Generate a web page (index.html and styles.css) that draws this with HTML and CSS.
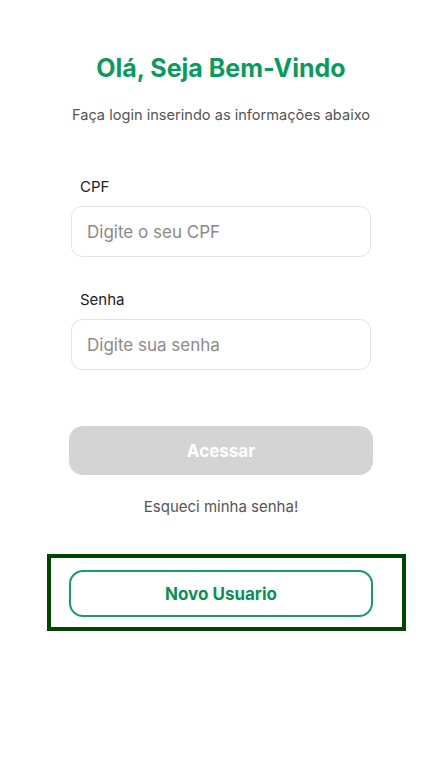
FILE: index.html
```html
<!DOCTYPE html>
<html lang="pt-BR">
<head>
  <meta name="viewport" content="width=device-width, initial-scale=1.0">
  <title>Login</title>
  <link rel="stylesheet" href="styles.css">
</head>
<body>
  <div class="page">
    <h1 class="title">Olá, Seja Bem-Vindo</h1>
    <p class="subtitle">Faça login inserindo as informações abaixo</p>

    <!-- Login form -->
    <form class="login">
      <label class="label label-first" for="cpf">CPF</label>
      <input class="field" id="cpf" type="text" placeholder="Digite o seu CPF">

      <label class="label" for="senha">Senha</label>
      <input class="field" id="senha" type="password" placeholder="Digite sua senha">

      <button class="btn-access" type="button">Acessar</button>
    </form>

    <a class="forgot" href="#">Esqueci minha senha!</a>

    <!-- Highlighted new user button -->
    <div class="highlight">
      <button class="btn-new" type="button">Novo Usuario</button>
    </div>
  </div>
</body>
</html>
```

FILE: styles.css
```css
/* Basic styling */
body {
  margin: 0;
  padding: 0;
  background-color: #ffffff;
  font-family: Inter, "Noto Sans", sans-serif;
}

.page {
  width: 442px;
  padding-top: 53px;
  display: flex;
  flex-direction: column;
  align-items: center;
}

.title {
  margin: 0;
  font-size: 25px;
  line-height: 30px;
  font-weight: 700;
  color: #0b9a5d;
}

.subtitle {
  margin: 22px 0 0;
  font-size: 14.6px;
  line-height: 20px;
  color: #555555;
}

/* Form */
.login {
  width: 304px;
  display: flex;
  flex-direction: column;
  align-items: center;
}

.label {
  align-self: flex-start;
  margin: 33px 0 0 11px;
  font-size: 15px;
  line-height: 20px;
  color: #222222;
}

.label-first {
  margin-top: 52px;
}

.field {
  box-sizing: border-box;
  width: 300px;
  height: 51px;
  margin-top: 9px;
  padding: 0 15px;
  border: 1px solid #e4e4e4;
  border-radius: 11px;
  font-family: inherit;
  font-size: 17px;
  color: #333333;
  outline: none;
}

.field::placeholder {
  color: #8a8a8a;
}

.btn-access {
  width: 304px;
  height: 49px;
  margin-top: 56px;
  border: none;
  border-radius: 14px;
  background-color: #d4d4d4;
  color: #ffffff;
  font-family: inherit;
  font-size: 17px;
  font-weight: 700;
}

.forgot {
  margin-top: 22px;
  font-size: 15px;
  line-height: 20px;
  color: #555555;
  text-decoration: none;
}

/* Annotation box around the new user button */
.highlight {
  align-self: flex-start;
  margin: 37px 0 0 47px;
  width: 359px;
  box-sizing: border-box;
  border: 4px solid #034403;
  padding: 12px 0 10px 18px;
}

.btn-new {
  display: block;
  width: 304px;
  height: 47px;
  border: 2px solid #1a9a68;
  border-radius: 14px;
  background-color: #ffffff;
  color: #0b8f55;
  font-family: inherit;
  font-size: 17px;
  font-weight: 700;
}
```
